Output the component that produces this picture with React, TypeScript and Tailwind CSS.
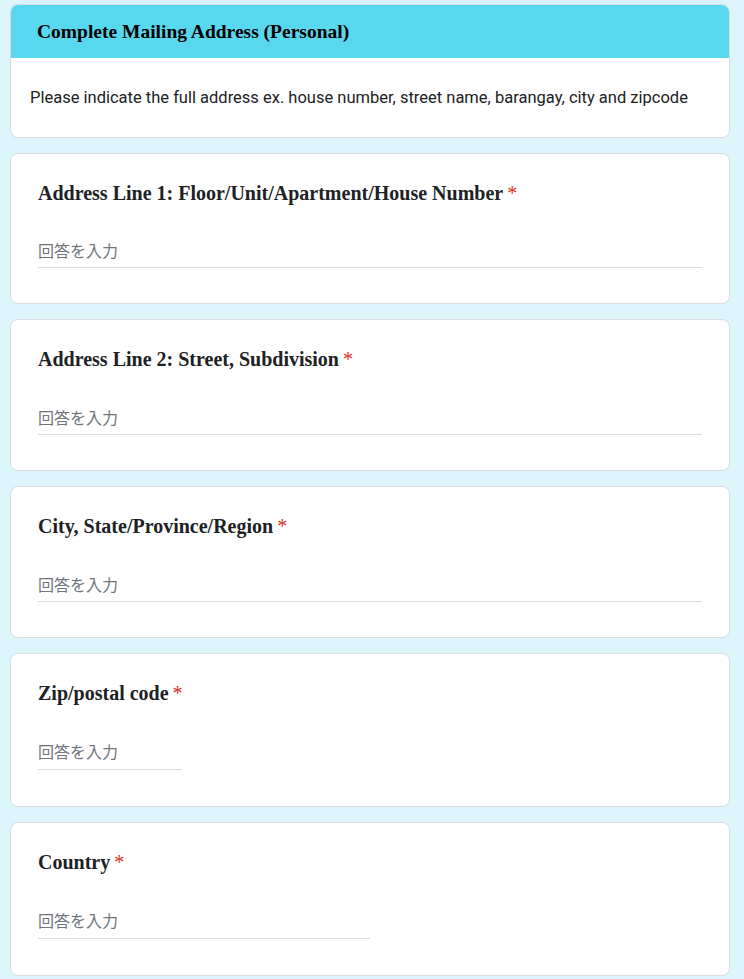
import React from 'react';

const titleFont = { fontFamily: '"Liberation Serif", serif' };

type Question = {
  id: number;
  title: string;
  inputWidth: string;
  gapClass: string;
  lineClass: string;
  bottomClass: string;
};

const questions: Question[] = [
  { id: 1, title: 'Address Line 1: Floor/Unit/Apartment/House Number', inputWidth: 'w-[664px]', gapClass: 'mt-[35px]', lineClass: 'pb-[3px]', bottomClass: 'pb-[35px]' },
  { id: 2, title: 'Address Line 2: Street, Subdivision', inputWidth: 'w-[664px]', gapClass: 'mt-[36px]', lineClass: 'pb-[3px]', bottomClass: 'pb-[35px]' },
  { id: 3, title: 'City, State/Province/Region', inputWidth: 'w-[664px]', gapClass: 'mt-[36px]', lineClass: 'pb-[3px]', bottomClass: 'pb-[35px]' },
  { id: 4, title: 'Zip/postal code', inputWidth: 'w-[144px]', gapClass: 'mt-[36px]', lineClass: 'pb-[4px]', bottomClass: 'pb-[36px]' },
  { id: 5, title: 'Country', inputWidth: 'w-[332px]', gapClass: 'mt-[36px]', lineClass: 'pb-[4px]', bottomClass: 'pb-[36px]' },
];

const QuestionCard: React.FC<{ q: Question }> = ({ q }) => (
  <div className={`bg-white border border-[#dadce0] rounded-lg pl-[27px] pr-6 pt-[27px] ${q.bottomClass}`}>
    <div className="text-[20px] leading-6 font-bold text-[#202124]" style={titleFont}>
      {q.title}
      <span className="text-[#d93025] ml-1 font-normal">*</span>
    </div>
    <div className={`${q.gapClass} ${q.inputWidth} ${q.lineClass} border-b border-[#dadce0]`}>
      <span className="text-[16px] leading-6 text-[#70757a]">回答を入力</span>
    </div>
  </div>
);

export default function App() {
  return (
    <div
      className="min-h-screen bg-[#dcf5fb] pt-1 pl-[10px] pb-4"
      style={{ fontFamily: 'Roboto, "Noto Sans CJK JP", sans-serif' }}
    >
      <div className="w-[720px] flex flex-col gap-[15px]">
        {/* Section header */}
        <div className="bg-white border border-[#dadce0] rounded-lg overflow-hidden">
          <div className="bg-[#57d8ef] h-[53px] flex items-center pl-[26px]">
            <h1 className="text-[19.5px] font-bold text-[#000]" style={titleFont}>
              Complete Mailing Address (Personal)
            </h1>
          </div>
          <div className="px-[19px] pt-[28px] pb-[27px]">
            <p className="text-[16.5px] leading-6 text-[#202124]">
              Please indicate the full address ex. house number, street name, barangay, city and zipcode
            </p>
          </div>
        </div>

        {questions.map((q) => (
          <QuestionCard key={q.id} q={q} />
        ))}
      </div>
    </div>
  );
}
